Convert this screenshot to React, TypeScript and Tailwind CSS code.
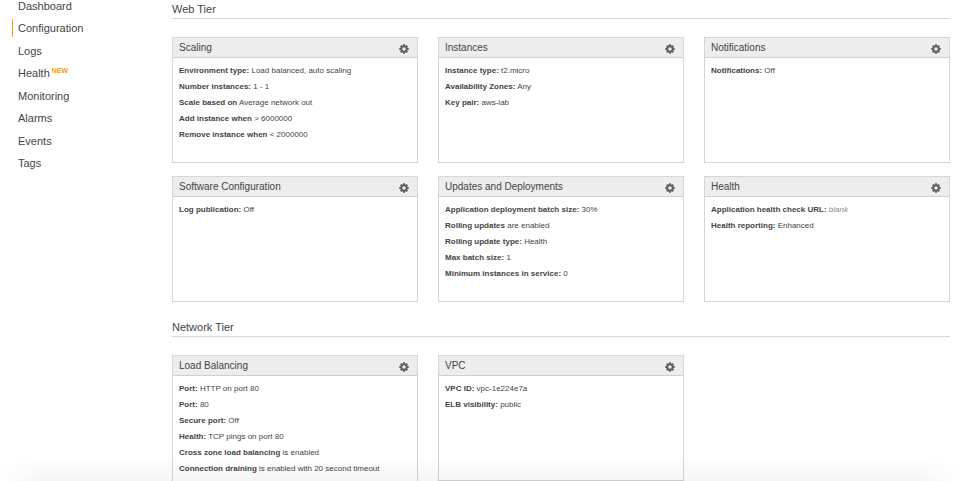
import { ReactNode } from 'react';

interface Setting {
  label: string;
  value: ReactNode;
}

interface Panel {
  title: string;
  settings: Setting[];
}

const NAV_ITEMS = [
  { name: 'Dashboard' },
  { name: 'Configuration', active: true },
  { name: 'Logs' },
  { name: 'Health', isNew: true },
  { name: 'Monitoring' },
  { name: 'Alarms' },
  { name: 'Events' },
  { name: 'Tags' },
];

const WEB_TIER: Panel[] = [
  {
    title: 'Scaling',
    settings: [
      { label: 'Environment type:', value: 'Load balanced, auto scaling' },
      { label: 'Number instances:', value: '1 - 1' },
      { label: 'Scale based on', value: 'Average network out' },
      { label: 'Add instance when', value: '> 6000000' },
      { label: 'Remove instance when', value: '< 2000000' },
    ],
  },
  {
    title: 'Instances',
    settings: [
      { label: 'Instance type:', value: 't2.micro' },
      { label: 'Availability Zones:', value: 'Any' },
      { label: 'Key pair:', value: 'aws-lab' },
    ],
  },
  {
    title: 'Notifications',
    settings: [{ label: 'Notifications:', value: 'Off' }],
  },
  {
    title: 'Software Configuration',
    settings: [{ label: 'Log publication:', value: 'Off' }],
  },
  {
    title: 'Updates and Deployments',
    settings: [
      { label: 'Application deployment batch size:', value: '30%' },
      { label: 'Rolling updates', value: 'are enabled' },
      { label: 'Rolling update type:', value: 'Health' },
      { label: 'Max batch size:', value: '1' },
      { label: 'Minimum instances in service:', value: '0' },
    ],
  },
  {
    title: 'Health',
    settings: [
      { label: 'Application health check URL:', value: <em className="text-[#888]">blank</em> },
      { label: 'Health reporting:', value: 'Enhanced' },
    ],
  },
];

const NETWORK_TIER: Panel[] = [
  {
    title: 'Load Balancing',
    settings: [
      { label: 'Port:', value: 'HTTP on port 80' },
      { label: 'Port:', value: '80' },
      { label: 'Secure port:', value: 'Off' },
      { label: 'Health:', value: 'TCP pings on port 80' },
      { label: 'Cross zone load balancing', value: 'is enabled' },
      { label: 'Connection draining', value: 'is enabled with 20 second timeout' },
    ],
  },
  {
    title: 'VPC',
    settings: [
      { label: 'VPC ID:', value: 'vpc-1e224e7a' },
      { label: 'ELB visibility:', value: 'public' },
    ],
  },
];

function GearIcon() {
  return (
    <svg viewBox="0 0 20 20" width="10" height="10" fill="none" stroke="#606060" aria-hidden="true">
      <circle cx="10" cy="10" r="5.4" strokeWidth="3.8" />
      {[0, 45, 90, 135].map((angle) => (
        <path
          key={angle}
          d="M10 0.6V4M10 16v3.4"
          strokeWidth="4"
          transform={`rotate(${angle} 10 10)`}
        />
      ))}
    </svg>
  );
}

function SettingsCard({ title, settings }: Panel) {
  return (
    <div className="min-h-[126px] border border-[#d5d5d5] bg-white">
      <div className="flex h-5 items-center justify-between border-b border-[#d0d0d0] bg-[#ededed] pl-1.5 pr-2">
        <h3 className="text-[10px] leading-4">{title}</h3>
        <button type="button" aria-label={`Edit ${title}`} className="cursor-pointer pt-0.5">
          <GearIcon />
        </button>
      </div>
      <ul className="px-1.5 pb-2 pt-[5px] text-[8px] leading-4">
        {settings.map((setting, i) => (
          <li key={i}>
            <strong>{setting.label}</strong> {setting.value}
          </li>
        ))}
      </ul>
    </div>
  );
}

function Tier({ title, panels }: { title: string; panels: Panel[] }) {
  return (
    <section>
      <h2 className="border-b border-[#d5d5d5] text-[11px] leading-[18px]">{title}</h2>
      <div className="mt-[18px] grid grid-cols-3 items-start gap-x-5 gap-y-[13px]">
        {panels.map((panel) => (
          <SettingsCard key={panel.title} {...panel} />
        ))}
      </div>
    </section>
  );
}

export default function App() {
  return (
    <div className="relative flex h-screen overflow-hidden bg-white font-['Liberation_Sans',Arial,sans-serif] text-[#444]">
      {/* Sidebar */}
      <nav className="-mt-[3px] w-[172px] shrink-0 pl-3">
        <ul className="flex min-h-[175px] flex-col justify-between text-[11px] leading-[18px]">
          {NAV_ITEMS.map((item) => (
            <li
              key={item.name}
              className={`flex border-l pl-[5px] ${item.active ? 'border-[#f90]' : 'border-transparent'}`}
            >
              <a href="#">{item.name}</a>
              {item.isNew && <span className="ml-0.5 text-[7px] font-bold leading-[14px] text-[#f90]">NEW</span>}
            </li>
          ))}
        </ul>
      </nav>

      {/* Configuration panels */}
      <main className="flex flex-1 flex-col gap-4 pr-2.5">
        <Tier title="Web Tier" panels={WEB_TIER} />
        <Tier title="Network Tier" panels={NETWORK_TIER} />
      </main>

      {/* Footer shadow, fading out towards both sides */}
      <div className="pointer-events-none absolute inset-x-0 bottom-0 h-6 bg-linear-to-b from-transparent to-black/4 [mask-image:linear-gradient(to_right,transparent,black_40px,black_calc(100%-40px),transparent)]" />
    </div>
  );
}
